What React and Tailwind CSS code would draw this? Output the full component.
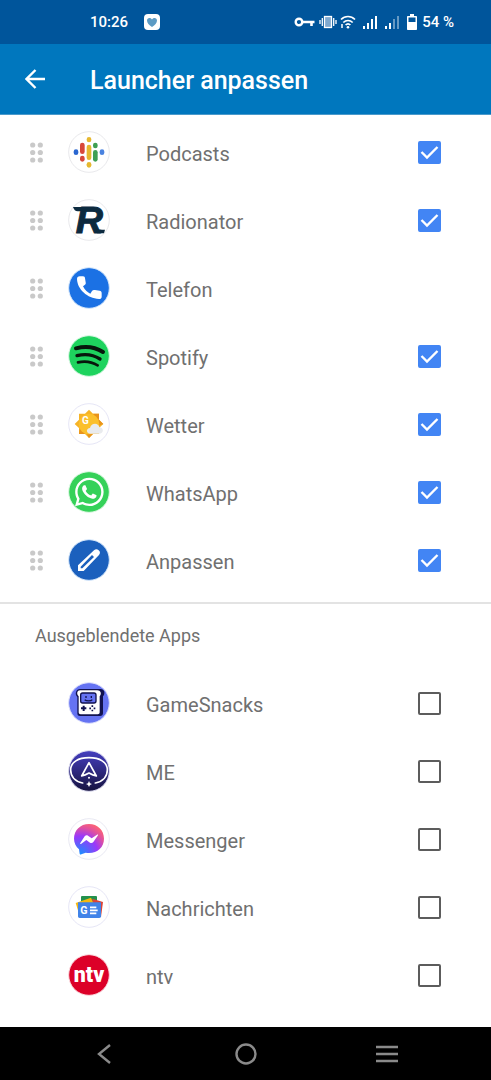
import { useState } from "react";
import { FaWhatsapp } from "react-icons/fa";

const VISIBLE_APPS = [
    { id: "podcasts", name: "Podcasts", icon: PodcastsIcon },
    { id: "radionator", name: "Radionator", icon: RadionatorIcon },
    { id: "telefon", name: "Telefon", icon: TelefonIcon, locked: true },
    { id: "spotify", name: "Spotify", icon: SpotifyIcon },
    { id: "wetter", name: "Wetter", icon: WetterIcon },
    { id: "whatsapp", name: "WhatsApp", icon: WhatsAppIcon },
    { id: "anpassen", name: "Anpassen", icon: AnpassenIcon },
];

const HIDDEN_APPS = [
    { id: "gamesnacks", name: "GameSnacks", icon: GameSnacksIcon },
    { id: "me", name: "ME", icon: MeIcon },
    { id: "messenger", name: "Messenger", icon: MessengerIcon },
    { id: "nachrichten", name: "Nachrichten", icon: NachrichtenIcon },
    { id: "ntv", name: "ntv", icon: NtvIcon },
];

/* === APP ICONS === */

// All app icons share a 126 unit box with the origin in the middle
function IconDisc({ fill = "#ffffff", ring = "#e9e9ec", children }) {
    return (
        <svg viewBox="-63 -63 126 126" className="size-[42px] shrink-0" aria-hidden="true">
            <circle r="61" fill={fill} stroke={ring} strokeWidth="3" />
            {children}
        </svg>
    );
}

function PodcastsIcon() {
    const bars = [
        [-39, -8, 9, "#2a66d0"],
        [-20, -28, 6, "#d8483a"],
        [-20, 11, 29, "#d8483a"],
        [0, -45, -29, "#e6b82f"],
        [0, -22, 24, "#e6b82f"],
        [0, 30, 47, "#e6b82f"],
        [19, -28, -11, "#3f9f54"],
        [19, -6, 29, "#3f9f54"],
        [39, -8, 9, "#4a83e0"],
    ];
    return (
        <IconDisc>
            {bars.map(([x, top, bottom, color]) => (
                <rect key={`${x}${top}`} x={x - 7} y={top} width="14" height={bottom - top} rx="7" fill={color} />
            ))}
        </IconDisc>
    );
}

function RadionatorIcon() {
    return (
        <IconDisc>
            <path d="M-48-39H16V-26H-34C-41-26-45-31-48-39Z" fill="#0c2a3f" />
            <text
                x="-40"
                y="39"
                fontFamily="'Liberation Sans', sans-serif"
                fontSize="113"
                fontWeight="700"
                fontStyle="italic"
                fill="#0c2a3f"
                stroke="#0c2a3f"
                strokeWidth="3"
            >
                R
            </text>
            <path d="M20 24C24 29 36 29 48 29L45 40H24Z" fill="#0c2a3f" />
        </IconDisc>
    );
}

function TelefonIcon() {
    return (
        <IconDisc fill="#1b71e4" ring="#d3e6fb">
            <path
                fill="#ffffff"
                d="M-28-35H-18C-14-35-12-33-12-29L-10-17C-9-13-10-11-13-9L-18-5C-12 7-4 13 4 17L9 9C11 6 14 5 18 6L32 8C36 9 38 11 38 15V26C38 31 35 33 30 33-5 31-35 4-36-27-36-32-33-35-28-35Z"
            />
        </IconDisc>
    );
}

function SpotifyIcon() {
    return (
        <IconDisc fill="#1ed35e" ring="#d6f7e1">
            <g fill="none" stroke="#07170c" strokeLinecap="round">
                <path d="M-39-23C-12-30 18-27 42-12" strokeWidth="12" />
                <path d="M-36-1C-12-7 13-4 33 9" strokeWidth="10" />
                <path d="M-33 19C-12 14 8 17 26 28" strokeWidth="8" />
            </g>
        </IconDisc>
    );
}

function WetterIcon() {
    return (
        <IconDisc ring="#e6e6f6">
            <path d="M0-43 12-31H30V-13L43 0 30 12V30H12L0 42-12 30H-30V12L-43 0-30-13V-31H-12Z" fill="#f6b326" />
            <path d="M30-31V-13L24-15 12-31ZM43 0 26 6 24-8 30-13ZM-30 30-28 14-12 30ZM0 42-8 26 16 24 12 30Z" fill="#e8931c" />
            <circle r="31" fill="#fbc02d" />
            <text x="-21" y="0" fontFamily="Roboto, sans-serif" fontSize="30" fontWeight="700" fill="#ffffff">
                G
            </text>
            <path d="M4 29C-10 29-9 12 3 12 7-5 29-4 31 10 45 10 45 29 32 29Z" fill="#e9ebee" />
        </IconDisc>
    );
}

function WhatsAppIcon() {
    return (
        <IconDisc fill="#35d159" ring="#dcf8e2">
            <FaWhatsapp x="-48" y="-49" width="98" height="98" size={98} color="#ffffff" />
        </IconDisc>
    );
}

function AnpassenIcon() {
    return (
        <IconDisc fill="#1b60bd" ring="#d3e6fb">
            <path
                fill="#ffffff"
                fillRule="evenodd"
                d="M-33 33V16L15-29C20-34 25-33 29-29 34-25 34-20 30-15L-16 33ZM-25 25H-20L15-9 9-15-25 20Z"
            />
        </IconDisc>
    );
}

function GameSnacksIcon() {
    return (
        <IconDisc fill="#6573f2" ring="#dcdffc">
            <path
                d="M-27-42H35C46-42 50-29 42-20V30C42 36 39 39 33 39H-27C-33 39-35 36-35 30V-18C-44-27-39-42-27-42Z"
                fill="#11124f"
            />
            <path
                d="M-27-38H25C35-38 39-28 32-20V28C32 32 30 34 26 34H-25C-29 34-31 32-31 28V-20C-39-28-35-38-27-38Z"
                fill="#ffffff"
            />
            <rect x="-25" y="-30" width="46" height="30" rx="6" fill="#6573f2" stroke="#11124f" strokeWidth="4" />
            <path d="M-9-21V-15M7-21V-15M-13-10C-8-5 6-5 10-10" fill="none" stroke="#11124f" strokeWidth="4" />
            <path d="M-16 8V24M-24 16H-8" stroke="#11124f" strokeWidth="6" />
            <path d="M10 7V12M10 20V25M1 16H6M14 16H19" stroke="#11124f" strokeWidth="5" />
        </IconDisc>
    );
}

function MeIcon() {
    return (
        <IconDisc fill="url(#me-disc)" ring="#dddcf0">
            <defs>
                <linearGradient id="me-disc" x1="0" y1="0" x2="0" y2="1">
                    <stop offset="0" stopColor="#453ec0" />
                    <stop offset="1" stopColor="#16133f" />
                </linearGradient>
            </defs>
            <path
                d="M-19 36C-43 31-55 15-55-3-55-27-32-40 0-40S55-27 55-3C55 15 43 31 19 36"
                fill="none"
                stroke="#ffffff"
                strokeWidth="5"
                strokeLinecap="round"
            />
            <path d="M0-25-22 15C-13 13-7 10 0 6 7 10 13 13 22 15Z" fill="none" stroke="#ffffff" strokeWidth="5" strokeLinejoin="round" />
            <circle cy="20" r="3" fill="#ffffff" />
            <path d="M0 30 3 37 9 39 3 42 0 48-3 42-9 39-3 37Z" fill="#ffffff" />
        </IconDisc>
    );
}

function MessengerIcon() {
    return (
        <IconDisc ring="#e9e9f3">
            <defs>
                <radialGradient id="messenger-bubble" cx="0.2" cy="1" r="1.1">
                    <stop offset="0" stopColor="#1690ff" />
                    <stop offset="0.55" stopColor="#9a38fa" />
                    <stop offset="0.8" stopColor="#e0509f" />
                    <stop offset="1" stopColor="#ff6670" />
                </radialGradient>
            </defs>
            <path
                d="M0-45C-26-45-45-26-45-1-45 12-39 23-30 31L-28 44C-27 47-25 47-23 46L-10 41C-7 42-3 42 0 42 26 42 45 24 45-1S26-45 0-45Z"
                fill="url(#messenger-bubble)"
            />
            <path d="M-26 12-13-8C-10-12-6-12-3-10L8-2 24-13C27-15 28-13 27-11L13 9C10 13 6 13 3 11L-8 3-23 14C-26 16-28 14-26 12Z" fill="#ffffff" />
        </IconDisc>
    );
}

function NachrichtenIcon() {
    return (
        <IconDisc ring="#e6e6f6">
            <rect x="-24" y="-33" width="48" height="40" rx="3" fill="#23914c" />
            <path d="M10-25 42-15 36 30H10Z" fill="#dc4437" />
            <path d="M-40-12 6-28 22 10-28 26Z" fill="#f7b90f" />
            <path d="M-33-14H36V28C36 31 34 33 31 33H-28C-31 33-33 31-33 28Z" fill="#4183e8" />
            <text x="-26" y="20" fontFamily="Roboto, sans-serif" fontSize="32" fontWeight="700" fill="#ffffff">
                G
            </text>
            <path d="M3 1H22M3 10H26M3 19H22" stroke="#ffffff" strokeWidth="5" />
        </IconDisc>
    );
}

function NtvIcon() {
    return (
        <IconDisc fill="#dc0028" ring="#fbd9de">
            <text
                x="0"
                y="20"
                textAnchor="middle"
                fontFamily="Roboto, sans-serif"
                fontSize="64"
                fontWeight="900"
                fill="#ffffff"
            >
                ntv
            </text>
        </IconDisc>
    );
}

/* === STATUS BAR === */

function SignalBars({ level }) {
    return (
        <svg viewBox="0 0 14 14" className="size-3.5" fill="#ffffff" aria-hidden="true">
            <rect x="0" y="11" width="2" height="3" />
            <rect x="4" y="8" width="2" height="6" />
            <rect x="8" y="4" width="2" height="10" opacity={level > 2 ? 1 : 0.4} />
            <rect x="12" y="1" width="2" height="13" opacity={level > 3 ? 1 : 0.4} />
        </svg>
    );
}

function StatusBar() {
    return (
        <div className="flex h-11 items-center bg-[#00559b] pr-[37px] pl-[90px] text-[15px] leading-5 font-medium text-white">
            <span>10:26</span>
            <svg viewBox="0 0 16 16" className="ml-4 size-4" aria-hidden="true">
                <rect width="16" height="16" rx="4" fill="#ffffff" />
                <path d="M8 13C5 11 3 9 3 6.500 3 4 6 3 8 5.500 10 3 13 4 13 6.500 13 9 11 11 8 13Z" fill="#5c9bc4" />
            </svg>
            <div className="ml-auto flex items-center">
                <svg viewBox="0 0 21 10" className="h-2.5 w-[21px]" fill="none" stroke="#ffffff" aria-hidden="true">
                    <circle cx="5" cy="5" r="3.300" strokeWidth="2.400" />
                    <path d="M8.500 5H20.500M17.500 5V9" strokeWidth="2.600" />
                </svg>
                <svg viewBox="0 0 18 14" className="ml-1 h-3.5 w-[18px]" fill="none" stroke="#ffffff" aria-hidden="true">
                    <rect x="5.500" y="1.500" width="7" height="11" fill="#7fa9cf" strokeWidth="1.300" />
                    <path d="M3.300 3V11M14.700 3V11" strokeWidth="1.300" />
                    <path d="M1 5V9M17 5V9" strokeWidth="1.300" />
                </svg>
                <svg viewBox="0 0 16 14" className="ml-[3px] h-3.5 w-4" fill="none" stroke="#ffffff" strokeWidth="1.700" aria-hidden="true">
                    <path d="M1 4.500C5 .5 11 .5 15 4.500M3.300 7.500C6 4.800 10 4.800 12.700 7.500M5.600 10C7 8.600 9 8.600 10.400 10" />
                    <circle cx="8" cy="12.300" r="1.300" fill="#ffffff" stroke="none" />
                    <path d="M2 9V13" strokeWidth="1.500" />
                </svg>
                <div className="ml-[7px] flex gap-2">
                    <SignalBars level={4} />
                    <SignalBars level={2} />
                </div>
                <svg viewBox="0 0 10 16" className="ml-2 h-4 w-2.5" aria-hidden="true">
                    <path d="M3 0H7V2H9C9.600 2 10 2.400 10 3V15C10 15.600 9.600 16 9 16H1C.4 16 0 15.600 0 15V3C0 2.400.4 2 1 2H3Z" fill="#ffffff" />
                    <rect x="1.500" y="3.500" width="7" height="4.500" fill="#00559b" />
                </svg>
                <span className="ml-[5px]">54 %</span>
            </div>
        </div>
    );
}

/* === LIST === */

function DragHandle({ name }) {
    return (
        <button type="button" aria-label={`${name} verschieben`} className="w-[13px] shrink-0">
            <svg viewBox="0 0 13 21" className="h-[21px] w-[13px]" fill="#c9c9c9" aria-hidden="true">
                {[3, 10.5, 18].map((y) => (
                    <g key={y}>
                        <circle cx="2.700" cy={y} r="2.600" />
                        <circle cx="10.300" cy={y} r="2.600" />
                    </g>
                ))}
            </svg>
        </button>
    );
}

function AppRow({ app, checked, onToggle, draggable }) {
    const Icon = app.icon;
    return (
        <li className="flex h-[68px] items-center pr-[50px] pl-[30px]">
            {draggable ? <DragHandle name={app.name} /> : <span className="w-[13px] shrink-0" />}
            <label htmlFor={app.locked ? undefined : app.id} className="ml-[25px] flex grow items-center gap-9">
                <Icon />
                <span className="pt-[3px] text-xl leading-6 text-[#707070]">{app.name}</span>
            </label>
            {!app.locked && (
                <span className="grid size-[23px] shrink-0 place-items-center">
                    <input
                        id={app.id}
                        type="checkbox"
                        checked={checked}
                        onChange={() => onToggle(app.id)}
                        className="peer col-start-1 row-start-1 size-[23px] appearance-none rounded-[2px] border-2 border-[#5c5c5c] bg-white checked:border-[#4285f4] checked:bg-[#4285f4]"
                    />
                    <svg
                        viewBox="0 0 23 23"
                        className="pointer-events-none invisible col-start-1 row-start-1 size-[23px] peer-checked:visible"
                        fill="none"
                        stroke="#ffffff"
                        strokeWidth="2.400"
                        aria-hidden="true"
                    >
                        <path d="M3.500 11 9 16.500 19.500 6" />
                    </svg>
                </span>
            )}
        </li>
    );
}

export default function App() {
    const [selected, setSelected] = useState(VISIBLE_APPS.map((app) => app.id));

    const toggle = (id) => {
        setSelected((prev) => (prev.includes(id) ? prev.filter((item) => item !== id) : [...prev, id]));
    };

    return (
        <div className="flex min-h-screen flex-col bg-white font-[Roboto,sans-serif]">
            <StatusBar />

            <header className="flex h-[71px] items-center border-b border-[#4a9acb] bg-[#0077be] pl-[25px] text-white">
                <button type="button" aria-label="Zurück">
                    <svg viewBox="0 0 20 20" className="size-5" fill="none" stroke="#ffffff" strokeWidth="2.400" aria-hidden="true">
                        <path d="M10.500 1 1.500 10 10.500 19M1.500 10H20" />
                    </svg>
                </button>
                <h1 className="ml-[45px] pt-[3px] text-[25px] leading-8 font-medium">Launcher anpassen</h1>
            </header>

            <main>
                <ul className="border-b-2 border-[#e3e3e3] pt-[3px] pb-2">
                    {VISIBLE_APPS.map((app) => (
                        <AppRow key={app.id} app={app} checked={selected.includes(app.id)} onToggle={toggle} draggable />
                    ))}
                </ul>

                <h2 className="px-[35px] pt-5 pb-[21px] text-lg leading-6 text-[#707070]">Ausgeblendete Apps</h2>
                <ul className="pb-4">
                    {HIDDEN_APPS.map((app) => (
                        <AppRow key={app.id} app={app} checked={selected.includes(app.id)} onToggle={toggle} />
                    ))}
                </ul>
            </main>

            <nav className="mt-auto grid h-[53px] grid-cols-[1fr_auto_1fr] items-center bg-black text-[#8a8a8a]">
                <button type="button" aria-label="Zurück" className="ml-[97px] justify-self-start">
                    <svg viewBox="0 0 14 20" className="h-5 w-3.5" fill="none" stroke="currentColor" strokeWidth="2.400" aria-hidden="true">
                        <path d="M13 1 2 10 13 19" />
                    </svg>
                </button>
                <button type="button" aria-label="Startbildschirm">
                    <svg viewBox="0 0 22 22" className="size-[22px]" fill="none" stroke="currentColor" strokeWidth="2.400" aria-hidden="true">
                        <circle cx="11" cy="11" r="9.500" />
                    </svg>
                </button>
                <button type="button" aria-label="Letzte Apps" className="mr-[93px] justify-self-end">
                    <svg viewBox="0 0 22 18" className="h-[18px] w-[22px]" stroke="currentColor" strokeWidth="2.400" aria-hidden="true">
                        <path d="M0 2H22M0 9H22M0 16H22" />
                    </svg>
                </button>
            </nav>
        </div>
    );
}
